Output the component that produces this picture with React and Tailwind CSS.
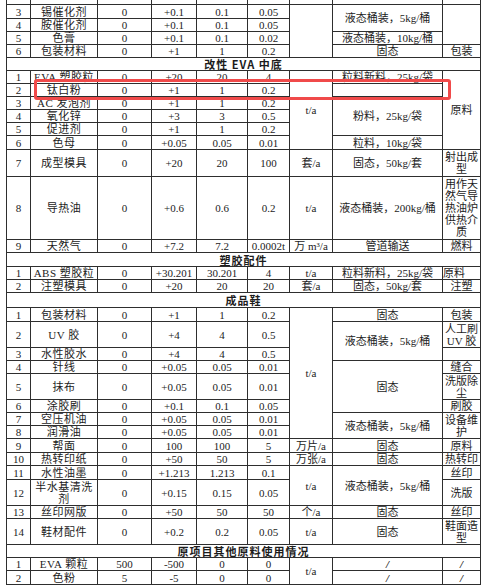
import React from "react";

const C = ({ children, rs, cs, className = "" }) => (
  <td
    rowSpan={rs}
    colSpan={cs}
    className={`border border-[#2e2e2e] p-0 text-center align-middle ${className}`}
  >
    {children}
  </td>
);

const Sec = ({ h, children }) => (
  <tr style={{ height: h }}>
    <C cs={9} className="font-bold tracking-[1px] font-['Noto_Sans_CJK_SC',sans-serif]">
      {children}
    </C>
  </tr>
);

// a plain material row: no, name, before, change, after, max
const M = ({ h, r, children }) => (
  <tr style={{ height: h }}>
    <C>{r[0]}</C>
    <C className="tracking-[0.5px]">{r[1]}</C>
    <C>{r[2]}</C>
    <C>{r[3]}</C>
    <C>{r[4]}</C>
    <C>{r[5]}</C>
    {children}
  </tr>
);

const App = () => {
  return (
    <div className="w-[485px] h-[588px] bg-white overflow-hidden">
      <div className="relative pl-[6px] mt-[-1px]">
        <table className="table-fixed border-collapse w-[474px] text-[11px] leading-[12px] text-[#1c1c1c] font-['Liberation_Serif','Noto_Sans_CJK_SC',serif]">
          <colgroup>
            <col className="w-[24px]" />
            <col className="w-[67px]" />
            <col className="w-[54px]" />
            <col className="w-[45px]" />
            <col className="w-[51px]" />
            <col className="w-[42px]" />
            <col className="w-[43px]" />
            <col className="w-[110px]" />
            <col className="w-[38px]" />
          </colgroup>
          <tbody>
            <tr style={{ height: 5 }}>
              <C /><C /><C /><C /><C /><C /><C /><C /><C />
            </tr>
            <M h={14} r={["3", "锡催化剂", "0", "+0.1", "0.1", "0.05"]}>
              <C rs={4} />
              <C rs={2}>液态桶装，5kg/桶</C>
              <C rs={3} />
            </M>
            <M h={13} r={["4", "胺催化剂", "0", "+0.1", "0.1", "0.05"]} />
            <M h={13} r={["5", "色膏", "0", "+0.1", "0.1", "0.02"]}>
              <C>液态桶装，10kg/桶</C>
            </M>
            <M h={13} r={["6", "包装材料", "0", "+1", "1", "0.2"]}>
              <C>固态</C>
              <C>包装</C>
            </M>
            <Sec h={13}>改性 EVA 中底</Sec>
            <M h={13} r={["1", "EVA 塑胶粒", "0", "+20", "20", "4"]}>
              <C rs={6}>t/a</C>
              <C>粒料新料，25kg/袋</C>
              <C rs={6}>原料</C>
            </M>
            <M h={13} r={["2", "钛白粉", "0", "+1", "1", "0.2"]}>
              <C />
            </M>
            <M h={13} r={["3", "AC 发泡剂", "0", "+1", "1", "0.2"]}>
              <C rs={3}>粉料，25kg/袋</C>
            </M>
            <M h={13} r={["4", "氧化锌", "0", "+3", "3", "0.5"]} />
            <M h={13} r={["5", "促进剂", "0", "+1", "1", "0.2"]} />
            <M h={14} r={["6", "色母", "0", "+0.05", "0.05", "0.01"]}>
              <C>粒料，10kg/袋</C>
            </M>
            <M h={27} r={["7", "成型模具", "0", "+20", "20", "100"]}>
              <C>套/a</C>
              <C>固态，50kg/套</C>
              <C>射出成<br />型</C>
            </M>
            <M h={63} r={["8", "导热油", "0", "+0.6", "0.6", "0.2"]}>
              <C>t/a</C>
              <C>液态桶装，200kg/桶</C>
              <C>用作天<br />然气导<br />热油炉<br />供热介<br />质</C>
            </M>
            <M h={13} r={["9", "天然气", "0", "+7.2", "7.2", "0.0002t"]}>
              <C className="whitespace-nowrap">万 m³/a</C>
              <C>管道输送</C>
              <C>燃料</C>
            </M>
            <Sec h={14}>塑胶配件</Sec>
            <M h={13} r={["1", "ABS 塑胶粒", "0", "+30.201", "30.201", "4"]}>
              <C>t/a</C>
              <C>粒料新料，25kg/袋</C>
              <C className="text-left">原料</C>
            </M>
            <M h={13} r={["2", "注塑模具", "0", "+20", "20", "20"]}>
              <C>套/a</C>
              <C>固态，50kg/套</C>
              <C>注塑</C>
            </M>
            <Sec h={15}>成品鞋</Sec>
            <M h={14} r={["1", "包装材料", "0", "+1", "1", "0.2"]}>
              <C rs={8}>t/a</C>
              <C>固态</C>
              <C>包装</C>
            </M>
            <M h={26} r={["2", "UV 胶", "0", "+4", "4", "0.5"]}>
              <C rs={2}>液态桶装，5kg/桶</C>
              <C>人工刷<br />UV 胶</C>
            </M>
            <M h={13} r={["3", "水性胶水", "0", "+4", "4", "0.5"]}>
              <C />
            </M>
            <M h={13} r={["4", "针线", "0", "+0.05", "0.05", "0.01"]}>
              <C rs={3}>固态</C>
              <C>缝合</C>
            </M>
            <M h={26} r={["5", "抹布", "0", "+0.05", "0.05", "0.01"]}>
              <C>洗版除<br />尘</C>
            </M>
            <M h={13} r={["6", "涂胶刷", "0", "+0.1", "0.1", "0.05"]}>
              <C>刷胶</C>
            </M>
            <M h={13} r={["7", "空压机油", "0", "+0.05", "0.05", "0.01"]}>
              <C rs={2}>液态桶装，5kg/桶</C>
              <C rs={2}>设备维<br />护</C>
            </M>
            <M h={13} r={["8", "润滑油", "0", "+0.05", "0.05", "0.01"]} />
            <M h={14} r={["9", "帮面", "0", "100", "100", "5"]}>
              <C className="whitespace-nowrap">万片/a</C>
              <C>固态</C>
              <C>原料</C>
            </M>
            <M h={12} r={["10", "热转印纸", "0", "+50", "50", "5"]}>
              <C className="whitespace-nowrap">万张/a</C>
              <C>固态</C>
              <C>热转印</C>
            </M>
            <M h={14} r={["11", "水性油墨", "0", "+1.213", "1.213", "0.1"]}>
              <C rs={2}>t/a</C>
              <C rs={2}>液态桶装，5kg/桶</C>
              <C>丝印</C>
            </M>
            <M h={26} r={["12", <>半水基清洗<br />剂</>, "0", "+0.15", "0.15", "0.05"]}>
              <C>洗版</C>
            </M>
            <M h={13} r={["13", "丝印网版", "0", "+50", "50", "50"]}>
              <C>个/a</C>
              <C>固态</C>
              <C>丝印</C>
            </M>
            <M h={26} r={["14", "鞋材配件", "0", "+0.2", "0.2", "0.05"]}>
              <C>t/a</C>
              <C>固态</C>
              <C>鞋面造<br />型</C>
            </M>
            <Sec h={13}>原项目其他原料使用情况</Sec>
            <M h={12} r={["1", "EVA 颗粒", "500", "-500", "0", "0"]}>
              <C rs={2}>t/a</C>
              <C className="italic font-bold">/</C>
              <C className="italic font-bold">/</C>
            </M>
            <M h={14} r={["2", "色粉", "5", "-5", "0", "0"]}>
              <C className="italic font-bold">/</C>
              <C className="italic font-bold">/</C>
            </M>
          </tbody>
        </table>
        <div className="absolute left-[34px] top-[80px] w-[417px] h-[21px] border-[3px] border-[#f04a4a] rounded-[3px]" />
      </div>
    </div>
  );
};

export default App;
